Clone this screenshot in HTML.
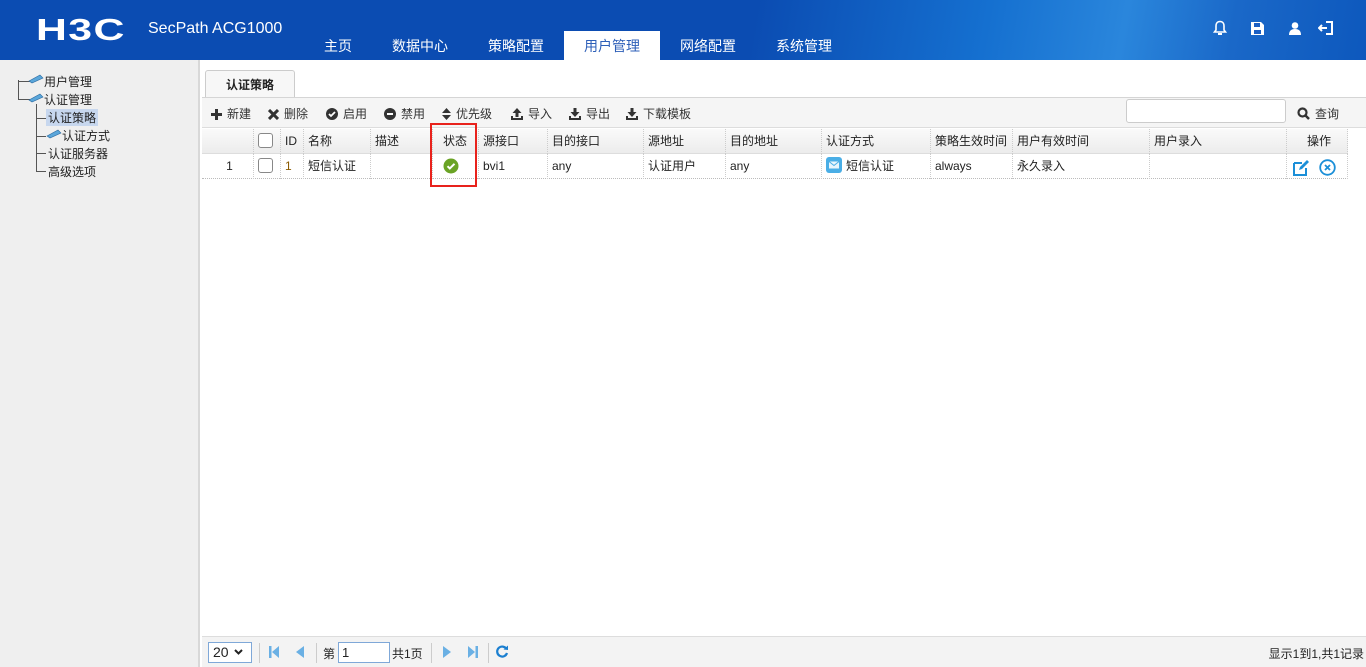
<!DOCTYPE html>
<html><head><meta charset="utf-8"><style>
*{margin:0;padding:0;box-sizing:border-box}
body{width:1366px;height:667px;overflow:hidden;font-family:"Liberation Sans","Noto Sans CJK SC",sans-serif;font-size:12px;color:#222;background:#fff;position:relative}
.hdr{position:absolute;left:0;top:0;width:1366px;height:60px;background:linear-gradient(100deg,#0b4cb2 0%,#0b4cb2 55%,#1570d0 72%,#2a86dc 82%,#1a68c8 90%,#0d58bd 100%)}
.logo{position:absolute;left:36px;top:12px;color:#fff;font:bold 31px "Liberation Sans",sans-serif;letter-spacing:1px;transform:scaleX(1.38);transform-origin:left}
.prod{position:absolute;left:148px;top:20px;color:#fff;font-size:16px}
.nav{position:absolute;top:31px;height:29px;color:#fff;font-size:14px;line-height:30px;text-align:center}
.nav.act{background:#fff;color:#2d5fb8}
.ic{position:absolute;top:20px;color:#fff}
.side{position:absolute;left:0;top:60px;width:200px;height:607px;background:#efefef;border-right:2px solid #d8d8d8}
.tr{position:absolute;font-size:12px;color:#222}
.ln{position:absolute;border-color:#555;border-style:solid;border-width:0}
.tab{position:absolute;left:205px;top:70px;width:90px;height:28px;border:1px solid #ccc;border-bottom:none;border-radius:3px 3px 0 0;background:#f7f7f7;text-align:center;line-height:28px;font-weight:bold}
.tb{position:absolute;left:202px;top:97px;width:1164px;height:31px;background:#f5f5f5;border-top:1px solid #d5d5d5;border-bottom:1px solid #ddd}
.tb span{position:absolute;top:7px;color:#333}
.tb svg{vertical-align:-2px;margin-right:5px}
.thr{position:absolute;left:202px;top:129px;width:1146px;height:25px;background:linear-gradient(#fafafa,#ececec);border-bottom:1px solid #ddd}
.row{position:absolute;left:202px;top:154px;width:1146px;height:25px;border-bottom:1px dotted #bbb}
.c{position:absolute;top:0;height:25px;line-height:24px;padding-left:4px;border-left:1px dotted #ccc;white-space:nowrap}
.cb{display:inline-block;width:15px;height:15px;border:1px solid #888;border-radius:3px;background:#fff;vertical-align:middle;margin-top:-3px}
.ft{position:absolute;left:202px;top:636px;width:1164px;height:31px;background:#f3f3f3;border-top:1px solid #ddd}
.sep{position:absolute;top:6px;width:1px;height:20px;background:#ccc}
.pg{position:absolute;top:9px}
</style></head><body>
<div class="hdr">
<div class="logo">H3C</div>
<div class="prod">SecPath ACG1000</div>
<div class="nav" style="left:310px;width:56px">主页</div>
<div class="nav" style="left:380px;width:80px">数据中心</div>
<div class="nav" style="left:476px;width:80px">策略配置</div>
<div class="nav act" style="left:564px;width:96px">用户管理</div>
<div class="nav" style="left:668px;width:80px">网络配置</div>
<div class="nav" style="left:764px;width:80px">系统管理</div>
<svg class="ic" style="left:1213px" width="14" height="16" viewBox="0 0 14 16"><path d="M7 1.5c-2.6 0-4 2-4 4.5v4L1.5 12h11L11 10V6c0-2.5-1.4-4.5-4-4.5z" fill="none" stroke="#fff" stroke-width="1.6"/><rect x="5" y="13" width="4" height="2" fill="#fff"/></svg>
<svg class="ic" style="left:1251px;top:22px" width="13" height="13" viewBox="0 0 13 13"><path d="M0 0h10l3 3v10H0z" fill="#fff"/><rect x="3" y="1" width="6" height="4" fill="#1a5fc4"/><rect x="3" y="8" width="7" height="4" fill="#1a5fc4"/></svg>
<svg class="ic" style="left:1289px;top:22px" width="12" height="13" viewBox="0 0 12 13"><circle cx="6" cy="3.5" r="3.3" fill="#fff"/><path d="M0 13c0-4 2-6 6-6s6 2 6 6z" fill="#fff"/></svg>
<svg class="ic" style="left:1318px" width="16" height="16" viewBox="0 0 16 16"><path d="M8 2h6v12H8" fill="none" stroke="#fff" stroke-width="2"/><path d="M1 8h8M4 5L1 8l3 3" fill="none" stroke="#fff" stroke-width="2"/></svg>
</div>
<div class="side">
<div class="ln" style="left:18px;top:20px;height:20px;border-left-width:1px"></div>
<div class="ln" style="left:18px;top:21px;width:12px;border-top-width:1px"></div>
<div class="ln" style="left:18px;top:39px;width:12px;border-top-width:1px"></div>
<div class="ln" style="left:36px;top:44px;height:68px;border-left-width:1px"></div>
<div class="ln" style="left:36px;top:58px;width:10px;border-top-width:1px"></div>
<div class="ln" style="left:36px;top:76px;width:10px;border-top-width:1px"></div>
<div class="ln" style="left:36px;top:93px;width:10px;border-top-width:1px"></div>
<div class="ln" style="left:36px;top:111px;width:10px;border-top-width:1px"></div>
<svg style="position:absolute;left:28px;top:14px" width="16" height="10"><path d="M1 7l11-6 3 3-11 5z" fill="#5aa6da" stroke="#2a6aa0" stroke-width=".6"/></svg>
<svg style="position:absolute;left:28px;top:33px" width="16" height="10"><path d="M1 7l11-6 3 3-11 5z" fill="#5aa6da" stroke="#2a6aa0" stroke-width=".6"/></svg>
<svg style="position:absolute;left:46px;top:69px" width="16" height="10"><path d="M1 7l11-6 3 3-11 5z" fill="#5aa6da" stroke="#2a6aa0" stroke-width=".6"/></svg>
<div class="tr" style="left:44px;top:13px">用户管理</div>
<div class="tr" style="left:44px;top:31px">认证管理</div>
<div class="tr" style="left:46px;top:49px;background:#c7d7ee;padding:0 2px">认证策略</div>
<div class="tr" style="left:62px;top:67px">认证方式</div>
<div class="tr" style="left:48px;top:85px">认证服务器</div>
<div class="tr" style="left:48px;top:103px">高级选项</div>
</div>
<div class="tab">认证策略</div>
<div class="tb">
<span style="left:9px"><svg width="11" height="11"><path d="M5.5 0v11M0 5.5h11" stroke="#333" stroke-width="3"/></svg>新建</span>
<span style="left:66px"><svg width="11" height="11"><path d="M1 1l9 9M10 1l-9 9" stroke="#333" stroke-width="3"/></svg>删除</span>
<span style="left:124px"><svg width="12" height="12"><circle cx="6" cy="6" r="6" fill="#333"/><path d="M3 6l2 2 4-4" fill="none" stroke="#fff" stroke-width="1.8"/></svg>启用</span>
<span style="left:182px"><svg width="12" height="12"><circle cx="6" cy="6" r="6" fill="#333"/><path d="M3 6h6" stroke="#fff" stroke-width="2"/></svg>禁用</span>
<span style="left:240px"><svg width="9" height="12"><path d="M0 5l4.5-5 4.5 5zM0 7l4.5 5 4.5-5z" fill="#333"/></svg>优先级</span>
<span style="left:309px"><svg width="12" height="12"><path d="M6 0l4.5 5H7.5v4h-3V5H1.5z" fill="#333"/><path d="M0 8v4h12V8h-2v2H2V8z" fill="#333"/></svg>导入</span>
<span style="left:367px"><svg width="12" height="12"><path d="M6 9l4.5-5H7.5V0h-3v4H1.5z" fill="#333"/><path d="M0 8v4h12V8h-2v2H2V8z" fill="#333"/></svg>导出</span>
<span style="left:424px"><svg width="12" height="12"><path d="M6 9l4.5-5H7.5V0h-3v4H1.5z" fill="#333"/><path d="M0 8v4h12V8h-2v2H2V8z" fill="#333"/></svg>下载模板</span>
<div style="position:absolute;left:924px;top:1px;width:160px;height:24px;border:1px solid #ccc;border-radius:3px;background:#fff"></div>
<span style="left:1095px"><svg width="13" height="13"><circle cx="5.5" cy="5.5" r="4" fill="none" stroke="#333" stroke-width="2.2"/><path d="M8.5 8.5l3.5 3.5" stroke="#333" stroke-width="2.5"/></svg>查询</span>
</div>
<div class="thr">
<div class="c" style="left:0;width:51px;border:none"></div>
<div class="c" style="left:51px;width:27px"><span class="cb"></span></div>
<div class="c" style="left:78px;width:23px">ID</div>
<div class="c" style="left:101px;width:67px">名称</div>
<div class="c" style="left:168px;width:62px">描述</div>
<div class="c" style="left:230px;width:46px;padding-left:10px">状态</div>
<div class="c" style="left:276px;width:69px">源接口</div>
<div class="c" style="left:345px;width:96px">目的接口</div>
<div class="c" style="left:441px;width:82px">源地址</div>
<div class="c" style="left:523px;width:96px">目的地址</div>
<div class="c" style="left:619px;width:109px">认证方式</div>
<div class="c" style="left:728px;width:82px">策略生效时间</div>
<div class="c" style="left:810px;width:137px">用户有效时间</div>
<div class="c" style="left:947px;width:137px">用户录入</div>
<div class="c" style="left:1084px;width:62px;text-align:center;border-right:1px dotted #ccc">操作</div>
</div>
<div class="row">
<div class="c" style="left:0;width:51px;border:none;text-align:center">1</div>
<div class="c" style="left:51px;width:27px"><span class="cb"></span></div>
<div class="c" style="left:78px;width:23px;color:#8a5a00">1</div>
<div class="c" style="left:101px;width:67px">短信认证</div>
<div class="c" style="left:168px;width:62px"></div>
<div class="c" style="left:230px;width:46px;padding-left:10px"><svg width="16" height="16" style="margin-top:4px" viewBox="0 0 16 16"><circle cx="8" cy="8" r="7.5" fill="#6aa325"/><path d="M4.5 8.2l2.3 2.3 4.7-4.7" fill="none" stroke="#fff" stroke-width="2"/></svg></div>
<div class="c" style="left:276px;width:69px">bvi1</div>
<div class="c" style="left:345px;width:96px">any</div>
<div class="c" style="left:441px;width:82px">认证用户</div>
<div class="c" style="left:523px;width:96px">any</div>
<div class="c" style="left:619px;width:109px"><svg width="16" height="16" style="vertical-align:-3px;margin-right:4px" viewBox="0 0 16 16"><rect width="16" height="16" rx="3" fill="#4aaee6"/><rect x="3" y="4.5" width="10" height="7" fill="#e8f5fc"/><path d="M3 4.5l5 4 5-4" fill="none" stroke="#4aaee6"/></svg>短信认证</div>
<div class="c" style="left:728px;width:82px">always</div>
<div class="c" style="left:810px;width:137px">永久录入</div>
<div class="c" style="left:947px;width:137px"></div>
<div class="c" style="left:1084px;width:62px;border-right:1px dotted #ccc;padding-left:6px"><svg width="16" height="16" style="margin-top:5px" viewBox="0 0 16 16"><path d="M1 3h8M1 3v12h12V8" fill="none" stroke="#1b8fd8" stroke-width="2"/><path d="M6 10l1-3 7-7 2 2-7 7z" fill="#1b8fd8"/></svg><svg width="17" height="17" style="margin-top:5px;margin-left:10px" viewBox="0 0 17 17"><circle cx="8.5" cy="8.5" r="7.3" fill="none" stroke="#1b8fd8" stroke-width="1.8"/><path d="M6 6l5 5M11 6l-5 5" stroke="#1b8fd8" stroke-width="1.8"/></svg></div>
</div>
<div style="position:absolute;left:430px;top:123px;width:47px;height:64px;border:2px solid #e8221c"></div>
<div class="ft">
<div style="position:absolute;left:6px;top:5px;width:44px;height:21px;border:1px solid #7fa8d8;background:#fff;font-size:14px;line-height:19px;padding-left:4px">20 <svg width="9" height="6" style="vertical-align:2px;margin-left:2px"><path d="M1 1l3.5 3.5L8 1" fill="none" stroke="#222" stroke-width="2"/></svg></div>
<div class="sep" style="left:57px"></div>
<svg class="pg" style="left:67px" width="10" height="12"><rect x="0" y="0" width="2.5" height="12" fill="#6ab0e4"/><path d="M10 0v12L3 6z" fill="#6ab0e4"/></svg>
<svg class="pg" style="left:94px" width="8" height="12"><path d="M8 0v12L0 6z" fill="#6ab0e4"/></svg>
<div class="sep" style="left:114px"></div>
<span style="position:absolute;left:121px;top:8px">第</span>
<div style="position:absolute;left:136px;top:5px;width:52px;height:21px;border:1px solid #7fa8d8;background:#fff;padding-left:3px;line-height:19px;font-size:13px">1</div>
<span style="position:absolute;left:190px;top:8px">共1页</span>
<div class="sep" style="left:229px"></div>
<svg class="pg" style="left:241px" width="8" height="12"><path d="M0 0v12L8 6z" fill="#6ab0e4"/></svg>
<svg class="pg" style="left:266px" width="10" height="12"><path d="M0 0v12L7 6z" fill="#6ab0e4"/><rect x="7.5" y="0" width="2.5" height="12" fill="#6ab0e4"/></svg>
<div class="sep" style="left:286px"></div>
<svg class="pg" style="left:294px;top:8px" width="13" height="13" viewBox="0 0 13 13"><path d="M10.5 4A5 5 0 1 0 11 8" fill="none" stroke="#1b7fd0" stroke-width="2.2"/><path d="M7.5 4.5L12 0.5V5z" fill="#1b7fd0"/></svg>
<span style="position:absolute;right:2px;top:8px">显示1到1,共1记录</span>
</div>
</body></html>
